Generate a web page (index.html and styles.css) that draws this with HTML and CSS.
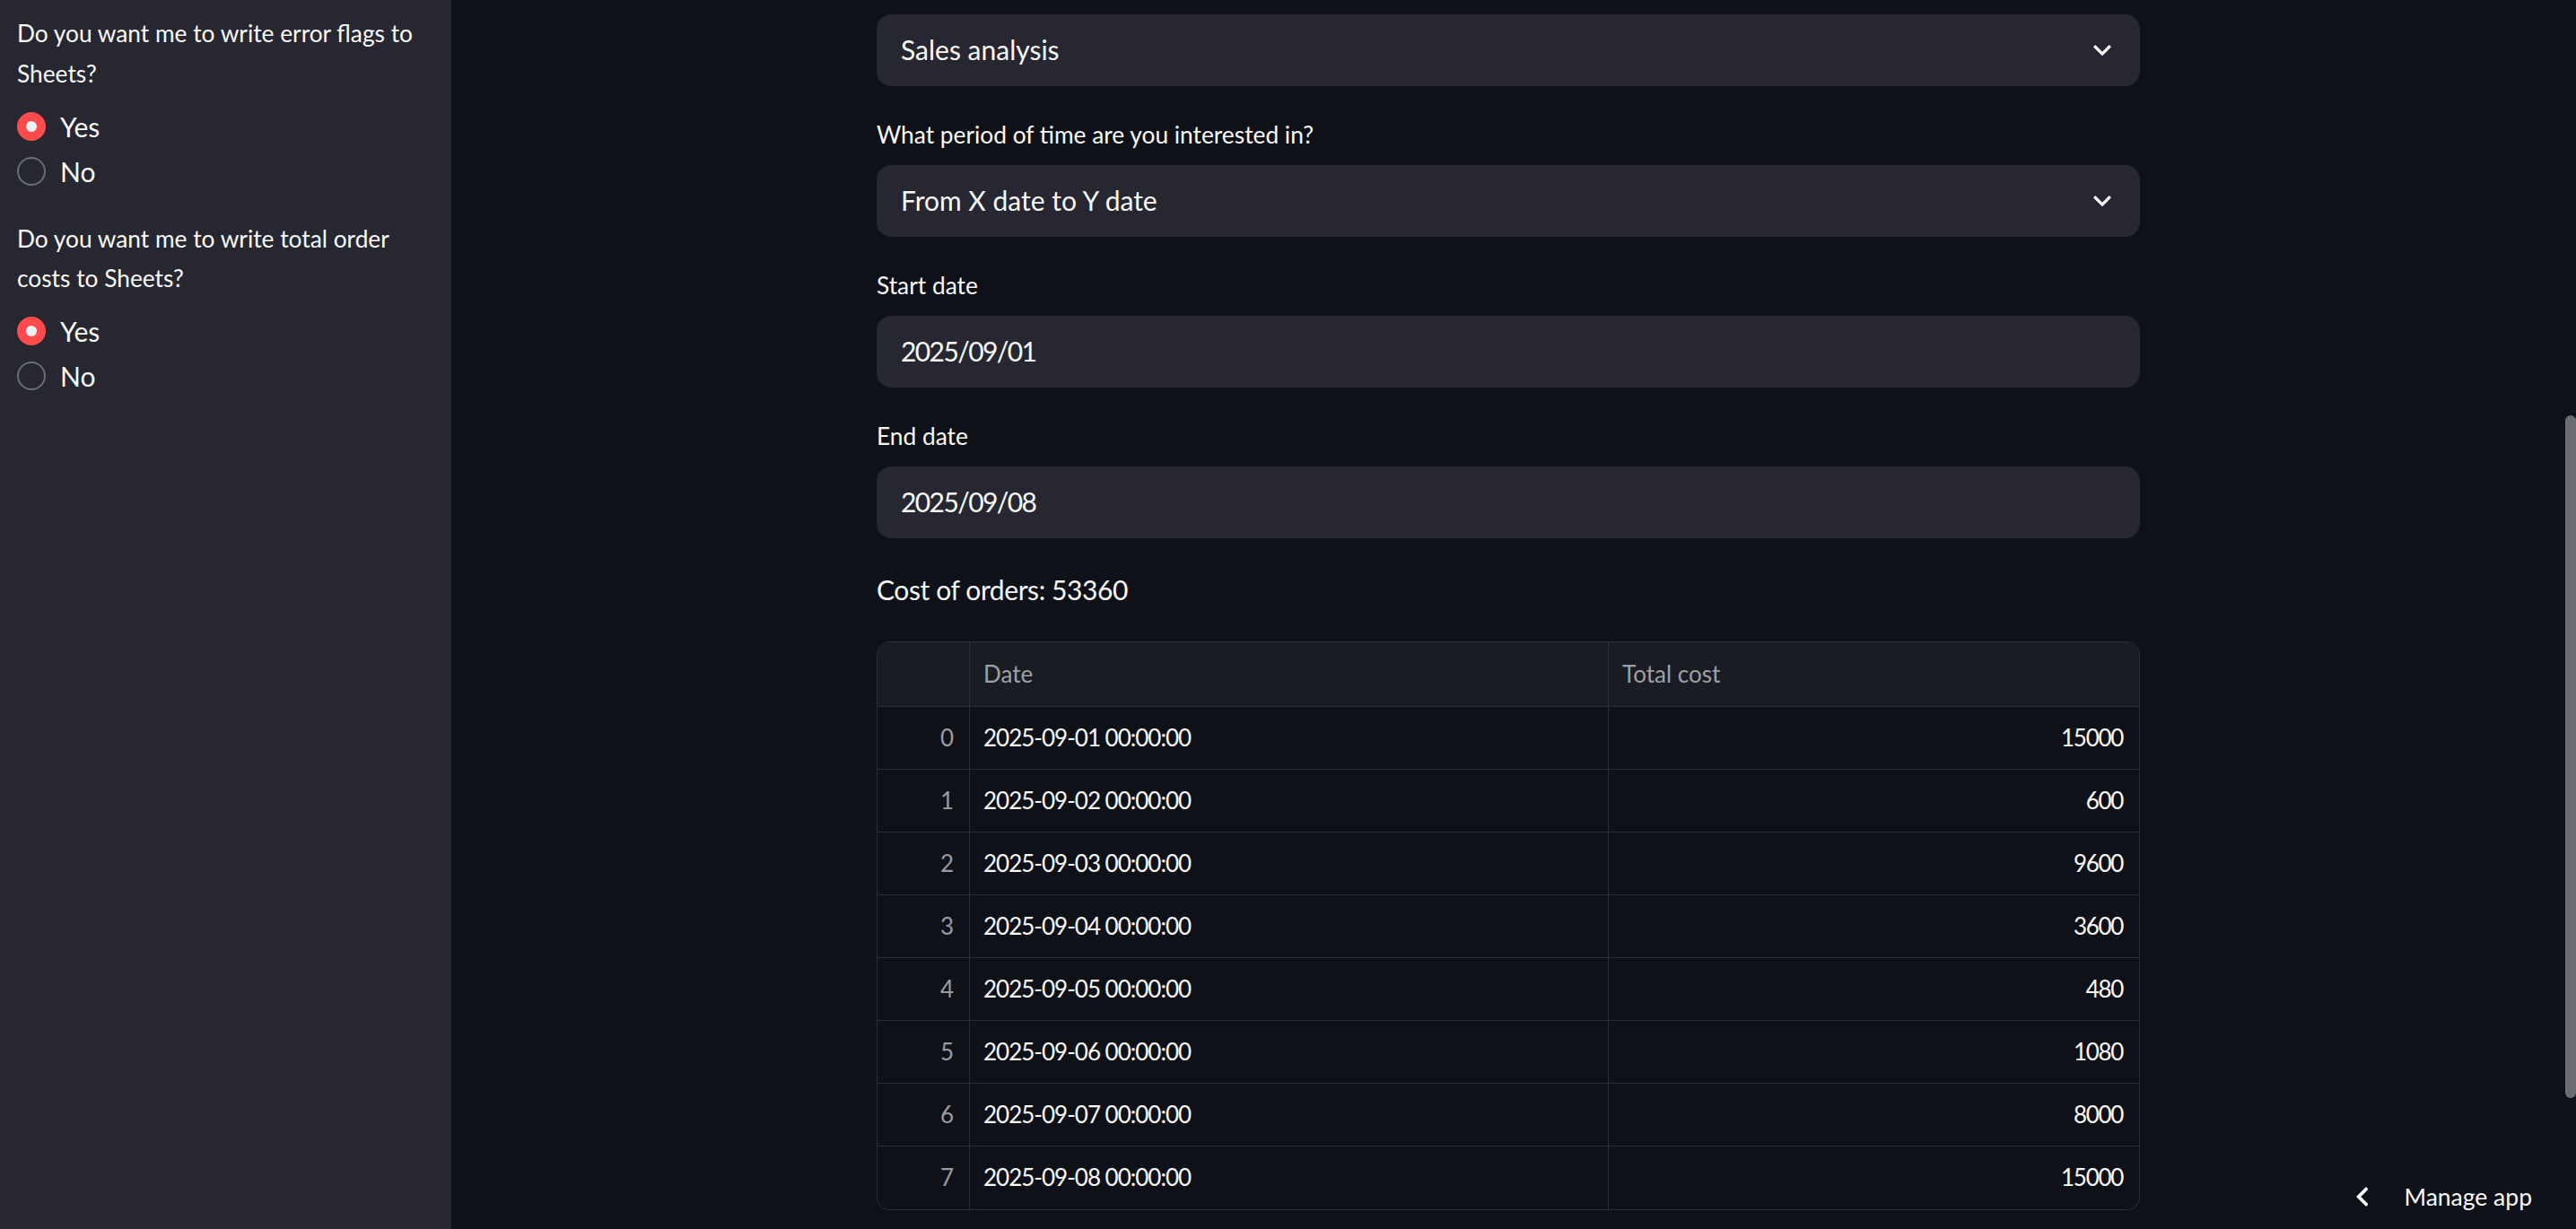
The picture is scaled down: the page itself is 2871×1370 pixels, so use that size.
FILE: index.html
```html
<!DOCTYPE html>
<html lang="en">
<head>
<meta charset="utf-8">
<title>Sales analysis</title>
<link rel="stylesheet" href="styles.css">
</head>
<body>
<div class="app">
  <aside class="sidebar">
    <div class="radio-group">
      <div class="q-label">Do you want me to write error flags to Sheets?</div>
      <div class="options">
        <div class="option"><span class="dot checked"></span><span class="opt-text">Yes</span></div>
        <div class="option"><span class="dot"></span><span class="opt-text">No</span></div>
      </div>
    </div>
    <div class="radio-group">
      <div class="q-label">Do you want me to write total order costs to Sheets?</div>
      <div class="options">
        <div class="option"><span class="dot checked"></span><span class="opt-text">Yes</span></div>
        <div class="option"><span class="dot"></span><span class="opt-text">No</span></div>
      </div>
    </div>
  </aside>

  <main class="main">
    <div class="content">
      <div class="widget">
        <div class="field select">
          <span class="value">Sales analysis</span>
          <svg class="chev" viewBox="6 8.59 12 7.41" width="20" height="12.4"><path d="M16.59 8.59L12 13.17 7.41 8.59 6 10l6 6 6-6z" fill="#fafafa"/></svg>
        </div>
      </div>
      <div class="widget">
        <div class="w-label">What period of time are you interested in?</div>
        <div class="field select">
          <span class="value">From X date to Y date</span>
          <svg class="chev" viewBox="6 8.59 12 7.41" width="20" height="12.4"><path d="M16.59 8.59L12 13.17 7.41 8.59 6 10l6 6 6-6z" fill="#fafafa"/></svg>
        </div>
      </div>
      <div class="widget">
        <div class="w-label">Start date</div>
        <div class="field"><span class="value digits">2025/09/01</span></div>
      </div>
      <div class="widget">
        <div class="w-label">End date</div>
        <div class="field"><span class="value digits">2025/09/08</span></div>
      </div>
      <p class="cost">Cost of orders: 53360</p>
      <div class="grid">
        <div class="c hd idx"></div><div class="c hd">Date</div><div class="c hd last">Total cost</div>
        <div class="c idx">0</div><div class="c">2025-09-01 00:00:00</div><div class="c num last">15000</div>
        <div class="c idx">1</div><div class="c">2025-09-02 00:00:00</div><div class="c num last">600</div>
        <div class="c idx">2</div><div class="c">2025-09-03 00:00:00</div><div class="c num last">9600</div>
        <div class="c idx">3</div><div class="c">2025-09-04 00:00:00</div><div class="c num last">3600</div>
        <div class="c idx">4</div><div class="c">2025-09-05 00:00:00</div><div class="c num last">480</div>
        <div class="c idx">5</div><div class="c">2025-09-06 00:00:00</div><div class="c num last">1080</div>
        <div class="c idx">6</div><div class="c">2025-09-07 00:00:00</div><div class="c num last">8000</div>
        <div class="c idx end">7</div><div class="c end">2025-09-08 00:00:00</div><div class="c num last end">15000</div>
      </div>
    </div>
  </main>

  <div class="scrollbar"><div class="thumb"></div></div>
</div>

<div class="manage">
  <svg viewBox="8 6 7.41 12" width="13.6" height="22"><path d="M15.41 7.41L14 6l-6 6 6 6 1.41-1.41L10.83 12z" fill="#fafafa"/></svg>
  <span>Manage app</span>
</div>
</body>
</html>
```

FILE: styles.css
```css
* { box-sizing: border-box; }
html, body {
  margin: 0;
  padding: 0;
  width: 2871px;
  height: 1370px;
  overflow: hidden;
  background: #0e1117;
  color: #fafafa;
  font-family: Lato, "Liberation Sans", sans-serif;
}
.app {
  display: flex;
  height: 1370px;
}
.sidebar {
  width: 503px;
  flex: none;
  background: #262730;
  padding: 15px 19px 0 19px;
}
.radio-group { margin-bottom: 29px; }
.q-label {
  font-size: 26.3px;
  line-height: 44.8px;
  margin-bottom: 12px;
}
.options {
  display: flex;
  flex-direction: column;
  gap: 2px;
}
.option {
  height: 48px;
  display: flex;
  align-items: center;
  gap: 16px;
  font-size: 30px;
}
.dot {
  width: 32px;
  height: 32px;
  border-radius: 50%;
  border: 2px solid #6b6d75;
  flex: none;
  display: flex;
  align-items: center;
  justify-content: center;
}
.dot.checked {
  background: #ff4b4b;
  border-color: #ff4b4b;
}
.dot.checked::after {
  content: "";
  width: 12px;
  height: 12px;
  border-radius: 50%;
  background: #f0f1f5;
}
.main {
  flex: 1;
  display: flex;
  justify-content: center;
}
.content {
  width: 1408px;
  padding-top: 16px;
  display: flex;
  flex-direction: column;
  gap: 32px;
}
.w-label {
  font-size: 26.3px;
  line-height: 44.8px;
  height: 48px;
  margin-bottom: 8px;
}
.field {
  height: 80px;
  background: #262730;
  border-radius: 16px;
  padding: 0 32px 3px 27px;
  display: flex;
  align-items: center;
  justify-content: space-between;
  font-size: 30px;
}
.chev { display: block; margin-top: 3px; }
.digits { letter-spacing: -1.6px; }
.cost {
  margin: 0;
  font-size: 30px;
  line-height: 51.2px;
  letter-spacing: -0.4px;
}
.grid {
  display: grid;
  grid-template-columns: 103px 712px 1fr;
  grid-auto-rows: 70px;
  grid-template-rows: 72px;
  border: 1px solid #2c2e35;
  border-radius: 14px;
  overflow: hidden;
  font-size: 26px;
}
.c {
  border-right: 1px solid #2c2e35;
  border-bottom: 1px solid #2c2e35;
  display: flex;
  align-items: center;
  padding: 0 18px 2px 15px;
  white-space: nowrap;
  letter-spacing: -1px;
}
.c.hd { letter-spacing: 0; }
.c.last { border-right: none; }
.c.end { border-bottom: none; }
.hd {
  background: #1a1c24;
  color: rgba(250, 250, 250, 0.6);
}
.idx {
  justify-content: flex-end;
  color: rgba(250, 250, 250, 0.6);
}
.num { justify-content: flex-end; letter-spacing: -1.3px; }
.scrollbar {
  width: 12px;
  flex: none;
  padding-top: 463px;
}
.thumb {
  height: 761px;
  border-radius: 6px;
  background: #6b6c72;
}
.manage {
  position: absolute;
  right: 49px;
  top: 1314px;
  height: 40px;
  display: flex;
  align-items: center;
  gap: 40px;
  font-size: 26.5px;
}
.manage svg { display: block; }
```
